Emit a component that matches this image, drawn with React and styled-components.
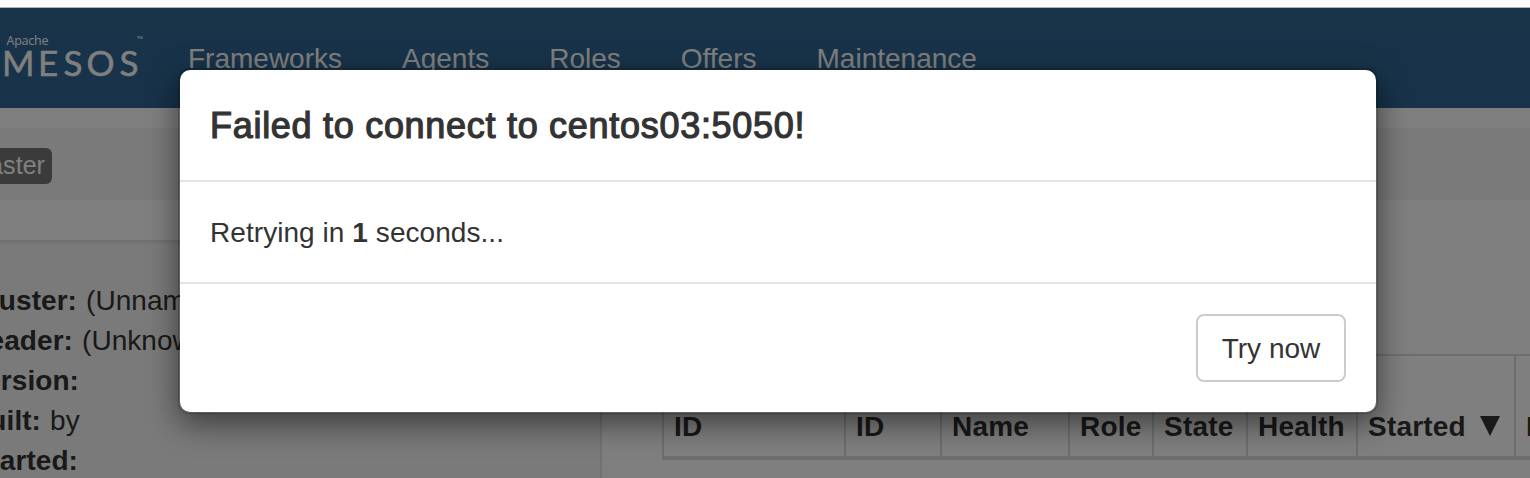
import React from 'react';
import styled, { createGlobalStyle } from 'styled-components';

const Global = createGlobalStyle`
  *, *::before, *::after { box-sizing: border-box; }
  body {
    margin: 0;
    overflow: hidden;
    background: #fff;
    color: #333;
    font: 28px/40px "Liberation Sans", Arial, sans-serif;
    letter-spacing: 0.06px;
  }
`;

const Screen = styled.div`
  position: relative;
  width: 1530px;
  height: 478px;
  overflow: hidden;
`;

const BrowserEdge = styled.div`
  height: 8px;
  background: #fcfcfd;
  border-bottom: 1px solid #b3b3b3;
`;

const Page = styled.div`
  height: 470px;
  background: #fff;
`;

const Navbar = styled.nav`
  display: flex;
  height: 100px;
  background: linear-gradient(#326893, #306594);
  letter-spacing: 0;
`;

const Brand = styled.div`
  width: 158px;
  flex: none;
`;

const NavLink = styled.a`
  padding: 31px 30px 0;
  color: #fff;
`;

const Breadcrumb = styled.div`
  height: 72px;
  margin: 20px 0 40px;
  padding-top: 20px;
  background: #f5f5f5;
`;

const Badge = styled.span`
  display: flex;
  justify-content: flex-end;
  width: 52px;
  height: 36px;
  padding-right: 7px;
  overflow: hidden;
  border-radius: 0 6px 6px 0;
  background: #777;
  color: #fff;
  font-size: 25px;
  line-height: 35px;
`;

const Columns = styled.div`
  display: flex;
  height: 238px;
`;

const Sidebar = styled.aside`
  width: 602px;
  flex: none;
  padding-top: 39px;
  border: 2px solid #e3e3e3;
  border-width: 2px 2px 0 0;
  background: #f5f5f5;
  box-shadow: inset 0 2px 2px rgba(0, 0, 0, 0.05);
`;

const Fact = styled.div`
  display: flex;
  gap: 9px;
  height: 40px;
  white-space: nowrap;
`;

const FactName = styled.b`
  display: flex;
  justify-content: flex-end;
  width: ${(p) => p.$width}px;
`;

const Main = styled.main`
  flex: 1;
  padding: 114px 0 0 60px;
`;

const HeadRow = styled.div`
  display: flex;
  width: 960px;
  height: 106px;
  border-top: 2px solid #ddd;
  border-bottom: 4px solid #ddd;
`;

const HeadCell = styled.div`
  display: flex;
  align-items: flex-end;
  gap: 14px;
  flex: none;
  width: ${(p) => p.$width}px;
  padding: 0 0 9px 10px;
  border-left: 2px solid #ddd;
  font-weight: bold;
  letter-spacing: 0.2px;
  white-space: nowrap;
`;

const SortArrow = styled.svg`
  width: 20px;
  height: 20px;
  margin-bottom: 11px;
`;

const Backdrop = styled.div`
  position: absolute;
  inset: 8px 0 0;
  display: flex;
  align-items: flex-start;
  padding: 60px 0 0 178px;
  background: rgba(0, 0, 0, 0.5);
`;

const Dialog = styled.section`
  width: 1200px;
  height: 346px;
  border: 2px solid rgba(0, 0, 0, 0.2);
  border-radius: 12px;
  background: #fff;
  background-clip: padding-box;
  box-shadow: 0 10px 30px rgba(0, 0, 0, 0.5);
`;

const DialogHeader = styled.header`
  height: 112px;
  padding: 30px;
  border-bottom: 2px solid #e5e5e5;
`;

const DialogTitle = styled.h3`
  margin: 0;
  font-size: 36px;
  font-weight: normal;
  letter-spacing: 0.71px;
  line-height: 52px;
  -webkit-text-stroke: 1.2px #333;
`;

const DialogBody = styled.div`
  height: 100px;
  padding: 31px 30px;
`;

const DialogFooter = styled.footer`
  display: flex;
  justify-content: flex-end;
  padding: 30px;
  border-top: 2px solid #e5e5e5;
`;

const Button = styled.button`
  width: 150px;
  height: 68px;
  padding: 2px 0 0;
  border: 2px solid #ccc;
  border-radius: 8px;
  background: #fff;
  color: #333;
  font: inherit;
`;

const NAV = ['Frameworks', 'Agents', 'Roles', 'Offers', 'Maintenance'];

const FACTS = [
  { name: 'Cluster:', value: '(Unnamed)', width: 77 },
  { name: 'Leader:', value: '(Unknown)', width: 73 },
  { name: 'Version:', value: '', width: 79 },
  { name: 'Built:', value: 'by', width: 41 },
  { name: 'Started:', value: '', width: 78 },
];

const COLUMNS = [
  { label: 'ID', width: 182 },
  { label: 'ID', width: 96 },
  { label: 'Name', width: 128 },
  { label: 'Role', width: 84 },
  { label: 'State', width: 94 },
  { label: 'Health', width: 110 },
  { label: 'Started', width: 158, sorted: true },
  { label: 'Host', width: 108 },
];

function Logo() {
  return (
    <svg width="157" height="100" viewBox="0 8 157 100" fill="#fff">
      <text x="6.5" y="45" fontFamily="Open Sans, sans-serif" fontSize="12.5" textLength="42">Apache</text>
      <text x="2 38 63.5 86.5 119.5" y="76" fontFamily="Lato, sans-serif" fontSize="35" stroke="#fff" strokeWidth="0.5">MESOS</text>
      <text x="137" y="42" fontFamily="Open Sans, sans-serif" fontSize="8">™</text>
    </svg>
  );
}

export default function App() {
  return (
    <Screen>
      <Global />
      <BrowserEdge />
      <Page>
        <Navbar>
          <Brand><Logo /></Brand>
          {NAV.map((label) => <NavLink key={label}>{label}</NavLink>)}
        </Navbar>
        <Breadcrumb><Badge>Master</Badge></Breadcrumb>
        <Columns>
          <Sidebar>
            {FACTS.map((f) => (
              <Fact key={f.name}>
                <FactName $width={f.width}>{f.name}</FactName>
                <span>{f.value}</span>
              </Fact>
            ))}
          </Sidebar>
          <Main>
            <HeadRow>
              {COLUMNS.map((c, i) => (
                <HeadCell key={i} $width={c.width}>
                  {c.label}
                  {c.sorted && (
                    <SortArrow viewBox="0 0 20 20"><path d="M0 0H20L10 20Z" fill="#333" /></SortArrow>
                  )}
                </HeadCell>
              ))}
            </HeadRow>
          </Main>
        </Columns>
      </Page>
      <Backdrop>
        <Dialog>
          <DialogHeader><DialogTitle>Failed to connect to centos03:5050!</DialogTitle></DialogHeader>
          <DialogBody>Retrying in <b>1</b> seconds...</DialogBody>
          <DialogFooter><Button>Try now</Button></DialogFooter>
        </Dialog>
      </Backdrop>
    </Screen>
  );
}
